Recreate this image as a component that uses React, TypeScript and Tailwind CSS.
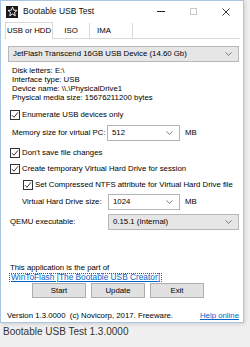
import React from 'react';

const Chevron = () => (
  <svg width="7" height="4" viewBox="0 0 7 4" className="shrink-0">
    <path d="M0.5 0.5 L3.5 3.3 L6.5 0.5" fill="none" stroke="#6d6d6d" strokeWidth="0.9" />
  </svg>
);

const Combo = ({ value, white, className }: { value: string; white?: boolean; className: string }) => (
  <div
    className={
      'flex items-center justify-between h-[16px] pl-[4px] pr-[6px] border ' +
      (white ? 'bg-white border-[#b4b4b4] ' : 'bg-[#e6e6e6] border-[#b8b8b8] ') +
      className
    }
  >
    <span className="whitespace-nowrap">{value}</span>
    <Chevron />
  </div>
);

const Check = ({ label, className }: { label: string; className: string }) => (
  <div className={'flex items-center h-[12px] ' + className}>
    <div className="w-[10px] h-[10px] border border-[#333] bg-white flex items-center justify-center shrink-0">
      <svg width="8" height="8" viewBox="0 0 8 8">
        <path d="M1 4.2 L3 6.3 L7 1.3" fill="none" stroke="#222" strokeWidth="0.9" />
      </svg>
    </div>
    <span className="ml-[2px] whitespace-nowrap">{label}</span>
  </div>
);

const Btn = ({ label }: { label: string }) => (
  <div className="w-[54px] h-[15px] bg-[#e1e1e1] border border-[#adadad] flex items-center justify-center">
    {label}
  </div>
);

const App = () => {
  return (
    <div className="w-[250px] h-[347px] bg-[#f0f0f0] overflow-hidden font-['Liberation_Sans',Arial,sans-serif] text-[7.8px] text-black">
      <div className="w-[244px] h-[323px] border border-[#a9c5e0] bg-white flex flex-col shadow-[1px_1px_4px_rgba(0,0,0,0.15)]">
        {/* title bar */}
        <div className="h-[21px] flex items-center shrink-0">
          <div className="ml-[5px] w-[12px] h-[12px] bg-[#1a1a1a] flex items-center justify-center">
            <svg width="11" height="11" viewBox="0 0 11 11">
              <path d="M5.5 1 L6.8 4.2 L10 4.4 L7.5 6.5 L8.3 9.8 L5.5 8 L2.7 9.8 L3.5 6.5 L1 4.4 L4.2 4.2 Z" fill="none" stroke="#fff" strokeWidth="0.9" />
            </svg>
          </div>
          <span className="ml-[5px] text-[8.5px] text-[#111] whitespace-nowrap">Bootable USB Test</span>
          <div className="ml-auto flex items-center h-full">
            <div className="w-[32px] flex justify-center">
              <div className="w-[8px] h-px bg-[#222]" />
            </div>
            <div className="w-[32px] flex justify-center">
              <div className="w-[7px] h-[7px] border border-[#c8c8c8]" />
            </div>
            <div className="w-[34px] flex justify-center">
              <svg width="8" height="8" viewBox="0 0 8 8">
                <path d="M0.5 0.5 L7.5 7.5 M7.5 0.5 L0.5 7.5" stroke="#222" strokeWidth="0.9" />
              </svg>
            </div>
          </div>
        </div>

        {/* tabs */}
        <div className="h-[17px] flex items-end border-b border-[#d9d9d9] mx-[3px] shrink-0">
          <div className="ml-[1px] w-[48px] h-[17px] bg-white border border-b-0 border-[#d9d9d9] flex items-center justify-center mb-[-1px] pb-px whitespace-nowrap">
            USB or HDD
          </div>
          <div className="w-[37px] h-[15px] border-r border-[#d9d9d9] flex items-center justify-center">ISO</div>
          <div className="w-[43px] h-[15px] border-r border-[#d9d9d9] flex items-center pl-[7px]">IMA</div>
        </div>

        {/* panel */}
        <div className="flex flex-col">
          <Combo value="JetFlash Transcend 16GB USB Device (14.60 Gb)" className="mt-[7px] ml-[7px] w-[231px]" />

          <div className="mt-[4px] pl-[11px] leading-[9px] whitespace-nowrap">
            <div>Disk letters: E:\</div>
            <div>Interface type: USB</div>
            <div>Device name: \\.\PhysicalDrive1</div>
            <div>Physical media size: 15676211200 bytes</div>
          </div>

          <Check label="Enumerate USB devices only" className="mt-[7px] ml-[9px]" />

          <div className="mt-[4px] flex items-center h-[16px]">
            <span className="pl-[11px] w-[106px] shrink-0 whitespace-nowrap">Memory size for virtual PC:</span>
            <Combo value="512" white className="w-[73px]" />
            <span className="ml-[5px]">MB</span>
          </div>

          <Check label="Don't save file changes" className="mt-[6px] ml-[9px]" />
          <Check label="Create temporary Virtual Hard Drive for session" className="mt-[4px] ml-[9px]" />
          <Check label="Set Compressed NTFS attribute for Virtual Hard Drive file" className="mt-[4px] ml-[22px]" />

          <div className="mt-[3px] flex items-center h-[16px]">
            <span className="pl-[21px] w-[107px] shrink-0 whitespace-nowrap">Virtual Hard Drive size:</span>
            <Combo value="1024" white className="w-[72px]" />
            <span className="ml-[5px]">MB</span>
          </div>

          <div className="mt-[4px] flex items-center h-[16px]">
            <span className="pl-[9px] w-[107px] shrink-0 whitespace-nowrap">QEMU executable:</span>
            <Combo value="0.15.1 (Internal)" className="w-[131px]" />
          </div>

          <div className="mt-[33px] pl-[9px] leading-[10px] whitespace-nowrap">
            <div>This application is the part of</div>
            <div className="h-[9px] flex items-center">
              <span className="border border-dotted border-[#0066cc] leading-[7px] px-px text-[8.3px] text-[#0066cc] underline ml-[-1px]">
                WinToFlash [The Bootable USB Creator]
              </span>
            </div>
          </div>

          <div className="flex justify-center gap-[5px] mt-px pr-[8px]">
            <Btn label="Start" />
            <Btn label="Update" />
            <Btn label="Exit" />
          </div>

          <div className="mt-[13px] h-[10px] flex items-center pl-[6px] pr-[4px] whitespace-nowrap">
            <span>Version 1.3.0000&nbsp; (c) Novicorp, 2017. Freeware.</span>
            <span className="ml-auto text-[#0066cc] underline">Help online</span>
          </div>
        </div>
      </div>
      <div className="pl-[3px] mt-[3px] text-[10px] leading-[12px] text-[#333] whitespace-nowrap">Bootable USB Test 1.3.0000</div>
    </div>
  );
};

export default App;
